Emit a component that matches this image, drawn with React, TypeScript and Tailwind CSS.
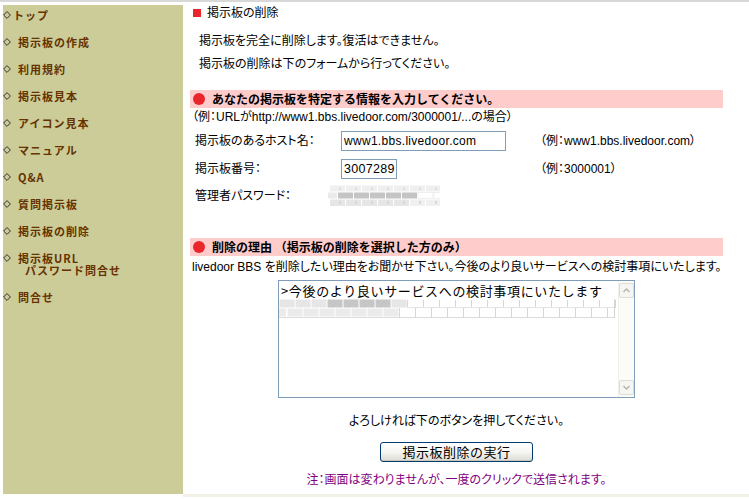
import React from "react";

const JP = "font-['Liberation_Sans','Noto_Sans_CJK_JP',sans-serif]";
const SIDE = "font-['Noto_Sans_CJK_JP','Noto_Sans',sans-serif]";
const PALT = "[font-feature-settings:'palt']";

function Diamond() {
  return (
    <svg width="8" height="8" viewBox="0 0 8 8" className="shrink-0">
      <polygon points="4,0.6 7.4,4 4,7.4 0.6,4" fill="none" stroke="#333" strokeWidth="1" />
    </svg>
  );
}

const items: { label: string; second?: string; tight?: boolean }[] = [
  { label: "トップ", tight: true },
  { label: "掲示板の作成" },
  { label: "利用規約" },
  { label: "掲示板見本" },
  { label: "アイコン見本" },
  { label: "マニュアル" },
  { label: "Q&A" },
  { label: "質問掲示板" },
  { label: "掲示板の削除" },
  { label: "掲示板URL", second: "\u00a0\u00a0パスワード問合せ" },
  { label: "問合せ" },
];

function Sidebar() {
  return (
    <div className={`w-[180px] h-[489px] ml-[3px] bg-[#cccc99] pt-[4px] flex flex-col gap-[15px] ${SIDE}`}>
      {items.map((it) => (
        <div key={it.label} className="flex items-start">
          <div className="h-[12px] flex items-center">
            <Diamond />
          </div>
          <span
            className={`${it.tight ? "ml-[2px]" : "ml-[7px]"} text-[11px] leading-[12px] font-bold text-[#663300] tracking-[1px] whitespace-nowrap`}
          >
            {it.label}
            {it.second && (
              <>
                <br />
                {it.second}
              </>
            )}
          </span>
        </div>
      ))}
    </div>
  );
}

function Bar({ text }: { text: string }) {
  return (
    <div className="h-[18px] bg-[#ffcccc] flex items-center">
      <span className="ml-[3px] w-[12px] h-[12px] rounded-full bg-[#e8262b] shrink-0" />
      <span className="ml-[7px] text-[12px] leading-[16px] font-bold text-black whitespace-nowrap font-['Noto_Sans_CJK_JP',sans-serif] [font-feature-settings:normal]">
        {text}
      </span>
    </div>
  );
}

function PasswordBricks() {
  const row1 = Array.from({ length: 7 }, (_, i) => i * 16 + 2);
  const row2 = Array.from({ length: 8 }, (_, i) => i * 16 - 6);
  return (
    <svg width="112" height="22" viewBox="0 0 112 22">
      {row1.map((x) => (
        <rect key={"a" + x} x={x} y={0.5} width={15} height={6} fill="#efefef" />
      ))}
      {row1.map((x) => (
        <rect key={"am" + x} x={x + 9} y={2} width={2} height={3} fill="#e2e2e2" />
      ))}
      {row2.map((x) => (
        <rect
          key={"b" + x}
          x={x}
          y={7.5}
          width={15}
          height={6}
          fill={x >= 8 && x < 84 ? "#c4c4c4" : x < 8 ? "#eaeaea" : "#ffffff"}
          stroke={x >= 84 ? "#e4e4e4" : "none"}
          strokeWidth={0.6}
        />
      ))}
      {row1.map((x) => (
        <rect key={"c" + x} x={x} y={14.5} width={15} height={6.5} fill={x > 80 ? "#f0f0f0" : "#e6e6e6"} />
      ))}
      {row1.map((x) => (
        <rect key={"cm" + x} x={x + 9} y={16} width={2} height={3} fill="#d8d8d8" />
      ))}
    </svg>
  );
}

function TextareaBricks() {
  const W = 339;
  const row1 = Array.from({ length: 22 }, (_, i) => i * 16);
  const row2 = Array.from({ length: 23 }, (_, i) => i * 16 - 8);
  return (
    <svg width={W} height="19" viewBox={`0 0 ${W} 19`}>
      {row1.map((x) =>
        x < 128 ? (
          <rect
            key={"a" + x}
            x={x + 0.5}
            y={0.5}
            width={15}
            height={8}
            fill={x >= 48 && x < 112 ? "#c6c6c6" : "#e6e6e6"}
          />
        ) : (
          <line key={"a" + x} x1={x + 0.5} y1={1} x2={x + 0.5} y2={9} stroke="#d6d6d6" strokeWidth={1} />
        )
      )}
      <line x1={128} y1={8.5} x2={W - 3} y2={8.5} stroke="#e4e4e4" strokeWidth={1} />
      {row2.map((x) =>
        x < 120 ? (
          <rect key={"b" + x} x={Math.max(x + 0.5, 0)} y={9.5} width={x < 0 ? 7 : 15} height={8} fill="#ebebeb" />
        ) : (
          <line key={"b" + x} x1={x + 0.5} y1={9} x2={x + 0.5} y2={18} stroke="#d6d6d6" strokeWidth={1} />
        )
      )}
      <line x1={0} y1={18.5} x2={W - 3} y2={18.5} stroke="#dcdcdc" strokeWidth={1} />
      <line x1={W - 3.5} y1={0} x2={W - 3.5} y2={19} stroke="#d6d6d6" strokeWidth={1} />
    </svg>
  );
}

function ScrollButton({ down }: { down?: boolean }) {
  return (
    <div className="w-[15px] h-[15px] rounded-[2px] border border-[#dedcd4] bg-[#f5f5f1] flex items-center justify-center">
      <svg width="7" height="5" viewBox="0 0 7 5">
        <polyline
          points={down ? "0.5,1 3.5,4 6.5,1" : "0.5,4 3.5,1 6.5,4"}
          fill="none"
          stroke="#b4b4ac"
          strokeWidth="1.4"
        />
      </svg>
    </div>
  );
}

export default function App() {
  return (
    <div className={`w-[749px] h-[499px] bg-white overflow-hidden ${JP} text-black`}>
      <div className="h-[2px] bg-[#d8d8d8]" />
      <div className="h-[3px] bg-white" />
      <div className="flex">
        <Sidebar />
        <div className={`ml-[7px] w-[533px] flex flex-col text-[12px] ${PALT}`}>
          {/* heading */}
          <div className="h-[16px] flex items-center">
            <span className="ml-[3px] w-[8px] h-[8px] bg-[#e8262b]" />
            <span className="ml-[6px] leading-[16px]">掲示板の削除</span>
          </div>
          <div className="mt-[12px] h-[16px] leading-[16px] pl-[9px]">掲示板を完全に削除します。復活はできません。</div>
          <div className="mt-[7px] h-[16px] leading-[16px] pl-[9px]">掲示板の削除は下のフォームから行ってください。</div>

          <div className="mt-[18px]">
            <Bar text="あなたの掲示板を特定する情報を入力してください。" />
          </div>
          <div className="mt-[1px] h-[16px] leading-[16px] pl-[2px] whitespace-nowrap">
            （例：URLがhttp://www1.bbs.livedoor.com/3000001/...の場合）
          </div>

          <div className="mt-[6px] grid grid-cols-[146px_199px_1fr] pl-[5px] items-center h-[20px]">
            <span className="leading-[16px]">掲示板のあるホスト名：</span>
            <div className="w-[165px] h-[20px] border border-[#7f9db9] bg-white flex items-center pl-[2px] font-['Liberation_Sans',sans-serif] text-[12px] tracking-[0.3px]">
              www1.bbs.livedoor.com
            </div>
            <span className="leading-[16px] whitespace-nowrap">（例：www1.bbs.livedoor.com）</span>
          </div>
          <div className="mt-[8px] grid grid-cols-[146px_199px_1fr] pl-[5px] items-center h-[20px]">
            <span className="leading-[16px]">掲示板番号：</span>
            <div className="w-[56px] h-[20px] border border-[#7f9db9] bg-white flex items-center pl-[2px] font-['Liberation_Sans',sans-serif] text-[12.5px] tracking-[0.3px]">
              3007289
            </div>
            <span className="leading-[16px] whitespace-nowrap">（例：3000001）</span>
          </div>
          <div className="mt-[6px] grid grid-cols-[146px_199px_1fr] pl-[5px] items-center h-[22px]">
            <span className="leading-[16px]">管理者パスワード：</span>
            <div className="-ml-[13px]">
              <PasswordBricks />
            </div>
            <span />
          </div>

          <div className="mt-[31px]">
            <Bar text="削除の理由 （掲示板の削除を選択した方のみ）" />
          </div>
          <div className="mt-[3px] h-[16px] leading-[16px] pl-[2px] whitespace-nowrap">
            livedoor BBS を削除したい理由をお聞かせ下さい。今後のより良いサービスへの検討事項にいたします。
          </div>

          <div className="mt-[5px] self-center w-[357px] h-[118px] border border-[#7f9db9] bg-white flex">
            <div className="flex-1 flex flex-col pt-[2px]">
              <div className="h-[16px] leading-[16px] pl-[2px] text-[13px] tracking-[0.65px] whitespace-nowrap font-['Noto_Sans_CJK_JP',sans-serif] [font-feature-settings:normal]">
                &gt;今後のより良いサービスへの検討事項にいたします
              </div>
              <TextareaBricks />
            </div>
            <div className="w-[17px] bg-[#fbfbf8] border-l border-[#f0f0ea] flex flex-col justify-between items-center py-[2px]">
              <ScrollButton />
              <ScrollButton down />
            </div>
          </div>

          <div className="mt-[15px] h-[16px] leading-[16px] text-center whitespace-nowrap">
            よろしければ下のボタンを押してください。
          </div>
          <div className="mt-[13px] flex justify-center">
            <div className="w-[153px] h-[20px] rounded-[3px] border border-[#003c74] bg-gradient-to-b from-white via-[#f6f6f3] to-[#dcdbd2] flex items-center justify-center text-[13px] tracking-[0.5px] font-['Noto_Sans_CJK_JP',sans-serif] [font-feature-settings:normal] shadow-[inset_0_-1px_0_#c9c7ba]">
              掲示板削除の実行
            </div>
          </div>
          <div className="mt-[10px] h-[16px] leading-[16px] text-center text-[#800080] whitespace-nowrap">
            注：画面は変わりませんが、一度のクリックで送信されます。
          </div>
        </div>
      </div>
      <div className="ml-[183px] h-[3px] bg-[#f2f1e8]" />
    </div>
  );
}
